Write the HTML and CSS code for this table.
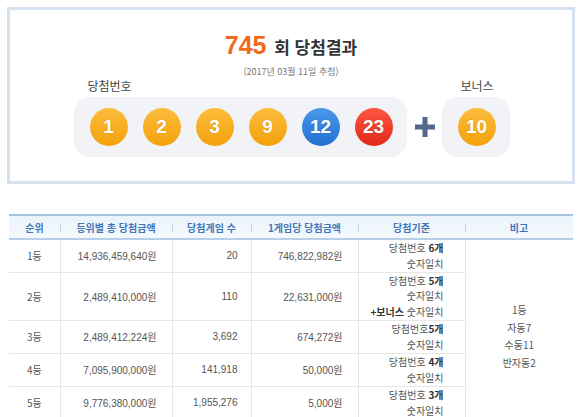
FILE: index.html
```html
<!DOCTYPE html>
<html lang="ko">
<head>
<meta charset="utf-8">
<link rel="stylesheet" href="styles.css">
</head>
<body>
<div class="result-box">
  <h2 class="title"><span class="round">745</span> 회 당첨결과</h2>
  <p class="date">(2017년 03월 11일 추첨)</p>
  <div class="numbers">
    <div class="group">
      <div class="label">당첨번호</div>
      <div class="balls">
        <span class="ball yellow">1</span>
        <span class="ball yellow">2</span>
        <span class="ball yellow">3</span>
        <span class="ball yellow">9</span>
        <span class="ball blue">12</span>
        <span class="ball red">23</span>
      </div>
    </div>
    <div class="plus"><svg width="20" height="20" viewBox="0 0 20 20"><rect x="7.5" y="0" width="5" height="20" fill="#51678b"/><rect x="0" y="7.5" width="20" height="5" fill="#51678b"/></svg></div>
    <div class="group bonus">
      <div class="label center">보너스</div>
      <div class="balls">
        <span class="ball yellow">10</span>
      </div>
    </div>
  </div>
</div>

<table class="prize">
  <thead>
    <tr>
      <th class="c1">순위</th>
      <th class="c2">등위별 총 당첨금액</th>
      <th class="c3">당첨게임 수</th>
      <th class="c4">1게임당 당첨금액</th>
      <th class="c5">당첨기준</th>
      <th class="c6">비고</th>
    </tr>
  </thead>
  <tbody>
    <tr class="r2">
      <td class="rank">1등</td>
      <td class="num">14,936,459,640원</td>
      <td class="num">20</td>
      <td class="num">746,822,982원</td>
      <td class="crit"><div>당첨번호 <b>6개</b></div><div>숫자일치</div></td>
      <td class="note" rowspan="5"><div>1등</div><div>자동7</div><div>수동11</div><div>반자동2</div></td>
    </tr>
    <tr class="r3">
      <td class="rank">2등</td>
      <td class="num">2,489,410,000원</td>
      <td class="num">110</td>
      <td class="num">22,631,000원</td>
      <td class="crit"><div>당첨번호 <b>5개</b></div><div>숫자일치</div><div><b>+보너스</b> 숫자일치</div></td>
    </tr>
    <tr class="r2">
      <td class="rank">3등</td>
      <td class="num">2,489,412,224원</td>
      <td class="num">3,692</td>
      <td class="num">674,272원</td>
      <td class="crit"><div>당첨번호<b>5개</b></div><div>숫자일치</div></td>
    </tr>
    <tr class="r2">
      <td class="rank">4등</td>
      <td class="num">7,095,900,000원</td>
      <td class="num">141,918</td>
      <td class="num">50,000원</td>
      <td class="crit"><div>당첨번호 <b>4개</b></div><div>숫자일치</div></td>
    </tr>
    <tr class="r2">
      <td class="rank">5등</td>
      <td class="num">9,776,380,000원</td>
      <td class="num">1,955,276</td>
      <td class="num">5,000원</td>
      <td class="crit"><div>당첨번호 <b>3개</b></div><div>숫자일치</div></td>
    </tr>
  </tbody>
</table>
</body>
</html>
```

FILE: styles.css
```css
* { box-sizing: border-box; }
body {
  margin: 0;
  padding: 7px 5px 0 7px;
  background: #fff;
  font-family: "Liberation Sans", "Noto Sans CJK KR", sans-serif;
  color: #555;
}
.result-box {
  width: 568px;
  height: 177px;
  border: 3px solid #d5e1ee;
  text-align: center;
  padding-top: 22px;
}
.title {
  margin: 0;
  font-size: 17px;
  font-weight: bold;
  color: #333;
  line-height: 26px;
  font-family: "Liberation Sans", "Noto Sans CJK KR", sans-serif;
}
.round {
  color: #f26a1b;
  font-size: 25px;
  font-family: "Liberation Sans", sans-serif;
  margin-right: 3px;
}
.date {
  margin: 4px 0 0;
  font-size: 9px;
  line-height: 12px;
  color: #777;
  font-family: "Noto Sans CJK KR", sans-serif;
}
.numbers {
  display: flex;
  justify-content: center;
  align-items: flex-end;
  margin-top: 0;
  padding-left: 1px;
}
.group { display: flex; flex-direction: column; }
.label {
  font-size: 12px;
  line-height: 16px;
  color: #444;
  text-align: left;
  padding-left: 14px;
  margin-bottom: 3px;
  font-family: "Noto Sans CJK KR", sans-serif;
}
.label.center { text-align: center; padding-left: 3px; }
.balls {
  display: flex;
  gap: 15px;
  align-items: center;
  height: 60px;
  padding: 0 14px 0 16px;
  background: #f1f3f6;
  border-radius: 16px;
}
.ball {
  width: 38px;
  height: 38px;
  border-radius: 50%;
  display: flex;
  align-items: center;
  justify-content: center;
  color: #fff;
  font-weight: bold;
  font-size: 19px;
  font-family: "Liberation Sans", sans-serif;
  text-shadow: 0 0 2px rgba(0,0,0,0.15);
}
.yellow { background: linear-gradient(#fcbc3c, #f4a10c); }
.blue { background: linear-gradient(#4b97ea, #2270d2); }
.red { background: linear-gradient(#fd5643, #e3291b); }
.plus {
  width: 35px;
  height: 60px;
  display: flex;
  align-items: center;
  justify-content: center;
  padding-left: 2px;
}

.prize {
  margin: 30px 0 0 2px;
  width: 564px;
  border-collapse: collapse;
  table-layout: fixed;
  font-size: 10px;
  font-family: "Liberation Sans", "Noto Sans CJK KR", sans-serif;
}
.prize th {
  height: 24px;
  padding: 0;
  border-top: 2px solid #a7c4e2;
  border-bottom: 2px solid #b5cfe8;
  background: linear-gradient(#eaf3fb, #f5f9fd);
  color: #4276b8;
  font-weight: bold;
  font-size: 10px;
  font-family: "Noto Sans CJK KR", sans-serif;
  position: relative;
}
.prize th + th::before {
  content: "";
  position: absolute;
  left: 0;
  top: 8px;
  height: 8px;
  border-left: 1px solid #c3d5e8;
}
.c1 { width: 51px; }
.c2 { width: 112px; }
.c3 { width: 79px; }
.c4 { width: 107px; }
.c5 { width: 107px; }
.c6 { width: 108px; }
.prize td {
  border: 1px solid #e6e6e6;
  border-top: 0;
  padding: 0;
  color: #555;
  vertical-align: middle;
}
.prize td:first-child { border-left: 0; }
.prize td.note { border-right: 0; }
.r2 td { height: 33px; }
.r3 td { height: 48px; }
.rank { text-align: center; font-family: "Noto Sans CJK KR", sans-serif; }
.num { text-align: right; padding-right: 15px !important; }
.prize td.num:nth-child(3) { padding-right: 13px !important; }
.crit {
  text-align: right;
  padding-right: 21px !important;
  font-family: "Noto Sans CJK KR", sans-serif;
  line-height: 15.5px;
}
.crit b { color: #333; }
.note {
  text-align: center;
  line-height: 17.5px;
  font-family: "Noto Sans CJK KR", sans-serif;
  padding-top: 14px !important;
}
```
